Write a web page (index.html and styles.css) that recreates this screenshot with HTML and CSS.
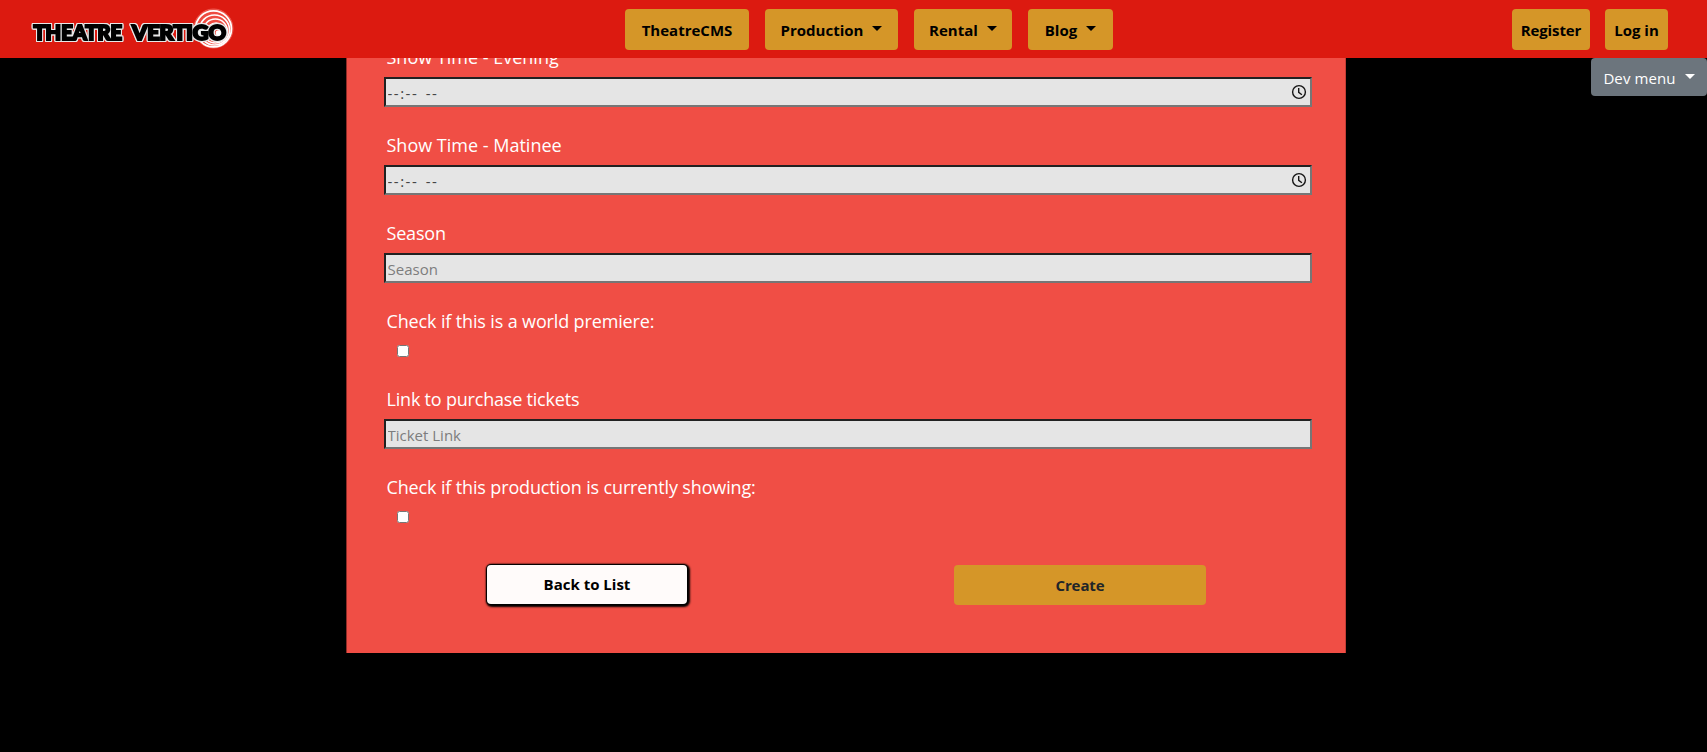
FILE: index.html
```html
<!DOCTYPE html>
<html lang="en">
<head>
<meta charset="utf-8">
<title>Create Production - Theatre Vertigo</title>
<link rel="stylesheet" href="styles.css">
</head>
<body>
<header class="navbar">
  <a class="brand" href="#">
    <svg class="logo" width="208" height="46" viewBox="0 0 208 46" role="img" aria-label="Theatre Vertigo">
      <g class="rings">
        <circle class="disc" cx="185.5" cy="22.5" r="19.5"/>
        <circle cx="185.5" cy="22.8" r="18"/>
        <circle cx="186.5" cy="24" r="15"/>
        <circle cx="187.3" cy="25" r="12"/>
        <circle cx="188.1" cy="26" r="9"/>
        <circle cx="189" cy="27" r="6"/>
      </g>
      <g class="wordmark">
        <text x="5.5" y="34" textLength="88.5" lengthAdjust="spacingAndGlyphs">THEATRE</text>
        <text x="104" y="34" textLength="94" lengthAdjust="spacingAndGlyphs">VERTIGO</text>
      </g>
      <circle class="eye" cx="190.5" cy="27" r="2.8"/>
    </svg>
  </a>
  <nav class="links">
    <a class="nav-btn cms" href="#">TheatreCMS</a>
    <a class="nav-btn production" href="#">Production<i class="caret"></i></a>
    <a class="nav-btn rental" href="#">Rental<i class="caret"></i></a>
    <a class="nav-btn blog" href="#">Blog<i class="caret"></i></a>
  </nav>
  <div class="account">
    <a class="nav-btn register" href="#">Register</a>
    <a class="nav-btn login" href="#">Log in</a>
  </div>
</header>
<button class="dev-menu" type="button">Dev menu<i class="caret"></i></button>
<main>
  <form class="panel">
    <div class="field"><label for="eve">Show Time - Evening</label><div class="time"><input id="eve" type="text" value="--:-- --"><svg class="clock" viewBox="0 0 16 16"><circle cx="8" cy="8" r="6.4"/><path d="M7.7 4v4.3l3.2 2.5"/></svg></div></div>
    <div class="field"><label for="mat">Show Time - Matinee</label><div class="time"><input id="mat" type="text" value="--:-- --"><svg class="clock" viewBox="0 0 16 16"><circle cx="8" cy="8" r="6.4"/><path d="M7.7 4v4.3l3.2 2.5"/></svg></div></div>
    <div class="field snug"><label for="season">Season</label><input id="season" type="text" placeholder="Season"></div>
    <div class="field check"><label for="premiere">Check if this is a world premiere:</label><input id="premiere" type="checkbox"></div>
    <div class="field snug"><label for="ticket">Link to purchase tickets</label><input id="ticket" type="text" placeholder="Ticket Link"></div>
    <div class="field check"><label for="showing">Check if this production is currently showing:</label><input id="showing" type="checkbox"></div>
    <div class="actions">
      <a class="back" href="#">Back to List</a>
      <button class="create" type="button">Create</button>
    </div>
  </form>
</main>
</body>
</html>
```

FILE: styles.css
```css
* { box-sizing: border-box; }
html, body { height: 100%; }
body {
  margin: 0;
  overflow: hidden;
  background: #000;
  font-family: "Open Sans", "Noto Sans", sans-serif;
  font-size: 15px;
}
a { text-decoration: none; color: inherit; }

.navbar {
  position: fixed;
  inset: 0 0 auto 0;
  z-index: 2;
  height: 58px;
  padding: 0 39px 0 28px;
  display: grid;
  grid-template-columns: 597px 1fr auto;
  background: #dc1a10;
}
.brand { padding-top: 6px; }
.logo { display: block; }
.rings circle { fill: none; stroke: #fff; stroke-width: 1.7; }
.rings .disc { fill: #ee4a40; stroke: #ee5a50; stroke-width: 1; }
.wordmark text {
  font-family: Lato, sans-serif;
  font-weight: 900;
  font-size: 20px;
  fill: #000;
  stroke: #000;
  stroke-width: 2px;
  stroke-linejoin: miter;
  filter: drop-shadow(1px 0 0 #e8e8e8) drop-shadow(-1px 0 0 #e8e8e8) drop-shadow(0 1px 0 #e8e8e8) drop-shadow(0 -1px 0 #e8e8e8);
}
.eye { fill: #fff; }

.links, .account { display: flex; padding-top: 9px; }
.links { gap: 16px; }
.account { gap: 15px; }
.nav-btn {
  height: 40.5px;
  display: flex;
  align-items: center;
  justify-content: center;
  padding-top: 1px;
  border-radius: 4px;
  background: #d59628;
  color: #000;
  font-weight: 700;
  white-space: nowrap;
}
.cms { width: 124px; }
.production { width: 133px; }
.rental { width: 98px; }
.blog { width: 85px; }
.register { width: 78px; letter-spacing: -.1px; }
.login { width: 63px; }
.caret {
  margin: -3px 0 0 9px;
  border: 5px solid transparent;
  border-top-color: currentColor;
  border-bottom: 0;
}

.dev-menu {
  position: fixed;
  top: 58px;
  right: 0;
  z-index: 1;
  width: 116px;
  height: 38px;
  display: flex;
  align-items: center;
  justify-content: center;
  border: 0;
  border-radius: 4px;
  background: #6c757d;
  color: #fff;
  font: inherit;
  letter-spacing: .1px;
  padding: 2px 0 0;
}
.dev-menu .caret { margin-top: -3px; }

.panel {
  width: 1000px;
  height: 653px;
  margin-left: 346px;
  padding: 41px 34px 0 37px;
  background: #f04e45;
  border-right: 1px solid #c43c34;
  border-left: 1px solid #8e2c27;
}
.field { height: 88px; }
.field.check { height: 78px; }
.field label {
  display: block;
  height: 36px;
  padding: 3px 0 0 2.5px;
  line-height: 26px;
  font-size: 18px;
  color: #fff;
}
.snug label { letter-spacing: -.2px; }
.check label { letter-spacing: -.14px; }
.field input:not([type=checkbox]) {
  display: block;
  width: 928px;
  height: 30px;
  margin: 0;
  padding: 2px 1px 0 1.5px;
  border: 2px inset #767676;
  background: #e5e5e5;
  font: inherit;
  color: #222;
}
.field input::placeholder { color: #7d7d7d; }
.time { display: grid; }
.time > * { grid-area: 1 / 1; }
.field .time input { letter-spacing: 1.5px; word-spacing: 2px; color: #444; }
.clock {
  width: 16px;
  height: 16px;
  margin: 7px 5px 0 0;
  justify-self: end;
  fill: none;
  stroke: #151515;
  stroke-width: 1.4;
}
.field input[type=checkbox] { display: block; width: 12px; height: 12px; margin: 4px 0 0 13px; }

.actions { display: flex; padding: 16px 0 0 103px; }
.back {
  width: 200px;
  height: 39px;
  display: flex;
  align-items: center;
  justify-content: center;
  border-radius: 4px;
  background: #fffbfa;
  color: #000;
  font-weight: 700;
  padding-bottom: 1px;
  box-shadow: 0 0 1px 1px #000, 1px 1px 2px 2px #000;
}
.create {
  width: 252px;
  height: 40px;
  margin-left: 267px;
  border: 0;
  border-radius: 4px;
  background: #d59628;
  color: #212529;
  font: inherit;
  font-weight: 700;
  letter-spacing: -.1px;
}
```
